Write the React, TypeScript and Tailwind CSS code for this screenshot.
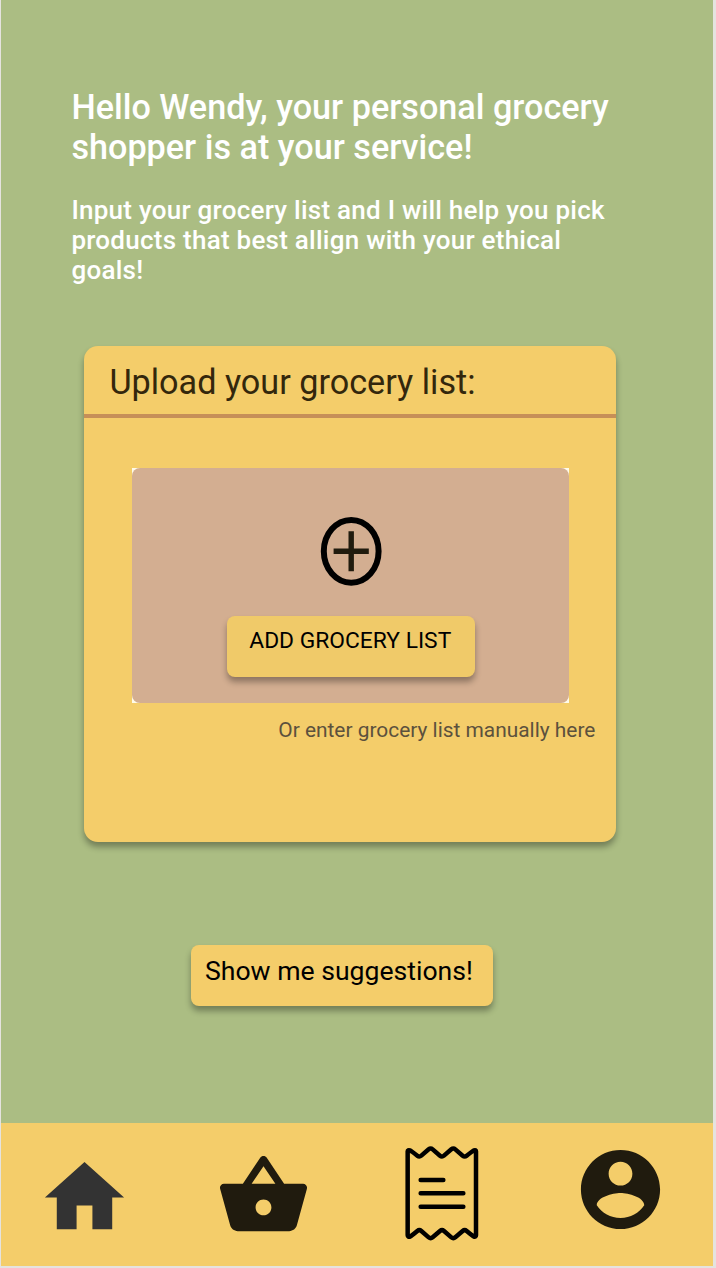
import type { ReactNode } from "react";

function HomeIcon() {
  return (
    <svg viewBox="0 0 24 24" className="block size-[95px] fill-[#333333]">
      <path d="M10 20v-6h4v6h5v-8h3L12 3 2 12h3v8z" />
    </svg>
  );
}

function BasketIcon() {
  return (
    <svg viewBox="0 0 24 24" className="block size-[95px] fill-[#201b0e]">
      <path d="M17.21 9l-4.38-6.56c-.19-.28-.51-.42-.83-.42-.32 0-.64.14-.83.43L6.79 9H2c-.55 0-1 .45-1 1 0 .09.01.18.04.27l2.54 9.27c.23.84 1 1.46 1.92 1.46h13c.92 0 1.69-.62 1.93-1.46l2.54-9.27L23 10c0-.55-.45-1-1-1h-4.79zM9 9l3-4.4L15 9H9zm3 8c-1.1 0-2-.9-2-2s.9-2 2-2 2 .9 2 2-.9 2-2 2z" />
    </svg>
  );
}

function ReceiptIcon() {
  return (
    <svg
      viewBox="104 105 222 291"
      className="block h-[97px] w-[74px] fill-none stroke-black stroke-[13.5]"
      strokeLinecap="round"
      strokeLinejoin="round"
    >
      <path d="M112 124V376Q112 381 119 380Q122 379 141 363Q147 358 153 363L175 382Q181 387 187 382L209 363Q215 358 221 363L243 382Q249 387 255 382L277 363Q283 358 289 363Q308 379 311 380Q317 381 317 376V124Q317 119 311 121Q308 122 289 137Q283 142 277 137L255 118Q249 113 243 118L221 137Q215 142 209 137L187 118Q181 113 175 118L153 137Q147 142 141 137Q122 122 119 121Q112 119 112 124Z" />
      <path d="M151 210H219M151 250H279M151 290H279" />
    </svg>
  );
}

function AccountIcon() {
  return (
    <svg viewBox="0 0 24 24" className="block size-[95px] fill-[#201b0e]">
      <path d="M12 2C6.48 2 2 6.48 2 12s4.48 10 10 10 10-4.48 10-10S17.52 2 12 2zm0 3c1.66 0 3 1.34 3 3s-1.34 3-3 3-3-1.34-3-3 1.34-3 3-3zm0 14.2c-2.5 0-4.71-1.28-6-3.22.03-1.99 4-3.08 6-3.08 1.99 0 5.97 1.09 6 3.08-1.29 1.94-3.5 3.22-6 3.22z" />
    </svg>
  );
}

function AddIcon() {
  return (
    <svg viewBox="0 0 62 70" className="ml-[188px] block h-[70px] w-[62px] fill-none">
      <ellipse cx="31.2" cy="35.3" rx="27.4" ry="31.4" className="stroke-black stroke-[6]" />
      <path d="M13.6 35.3H48.8M31.2 15.2V55.2" className="stroke-[#201b0e] stroke-[5.4]" />
    </svg>
  );
}

function NavItem({ label, className, children }: { label: string; className: string; children: ReactNode }) {
  return (
    <button aria-label={label} className={className}>
      {children}
    </button>
  );
}

export default function App() {
  return (
    <div className="h-[1268px] w-[716px] bg-[#e5e3df] pl-px font-['Roboto',sans-serif]">
      <div className="flex h-[1265.5px] w-[712.4px] flex-col bg-[#abbd83]">
        <header className="pt-[87px] pl-[70.4px] font-medium text-white">
          <h1 className="text-[34.2px] leading-[40px] whitespace-nowrap">
            Hello Wendy, your personal grocery
            <br />
            shopper is at your service!
          </h1>
          <p className="mt-[27.5px] text-[26px] leading-[30.4px] tracking-[0.25px] whitespace-nowrap">
            Input your grocery list and I will help you pick
            <br />
            products that best allign with your ethical
            <br />
            goals!
          </p>
        </header>

        <main className="flex-1">
          <section className="mt-[60.3px] ml-[83.4px] h-[496px] w-[532px] rounded-[14px] bg-[#f4cd6a] shadow-[0_5px_6px_rgba(0,0,0,0.33)]">
            <h2 className="h-[68.4px] pt-[16px] pl-[25px] text-[34.2px] leading-[40px] text-[#33270c]">
              Upload your grocery list:
            </h2>
            <div className="h-1 bg-[#c68f58]" />
            <div className="mt-[49.6px] ml-[47.6px] h-[235px] w-[437px] bg-[#fffbe9]">
              <div className="h-full rounded-[8px] bg-[#d3ae91] pt-[48px]">
                <AddIcon />
                <button className="mt-[30px] ml-[95.3px] flex h-[61px] w-[248px] justify-center rounded-[8px] bg-[#f0ca69] pt-[11px] pr-[2px] text-[22.8px] leading-[27px] whitespace-nowrap text-black shadow-[0_5px_6px_rgba(0,0,0,0.33)]">
                  ADD GROCERY LIST
                </button>
              </div>
            </div>
            <p className="mt-[15px] pr-[21px] text-right text-[20.9px] leading-[25px] text-[#5c513d]">
              Or enter grocery list manually here
            </p>
          </section>
          <button className="mt-[102.5px] ml-[190px] flex h-[61px] w-[302px] rounded-[8px] bg-[#f4cd6a] pt-[10px] pl-[14px] text-[26.6px] leading-[32px] whitespace-nowrap text-black shadow-[0_5px_6px_rgba(0,0,0,0.33)]">
            Show me suggestions!
          </button>
        </main>

        <nav className="flex h-[142.5px] items-start bg-[#f4cd6a]">
          <NavItem label="Home" className="mt-[26.7px] ml-[36px]">
            <HomeIcon />
          </NavItem>
          <NavItem label="Basket" className="mt-[25px] ml-[83.6px]">
            <BasketIcon />
          </NavItem>
          <NavItem label="Receipts" className="mt-[22.3px] ml-[94px]">
            <ReceiptIcon />
          </NavItem>
          <NavItem label="Account" className="mt-[19px] ml-[94px]">
            <AccountIcon />
          </NavItem>
        </nav>
      </div>
    </div>
  );
}
